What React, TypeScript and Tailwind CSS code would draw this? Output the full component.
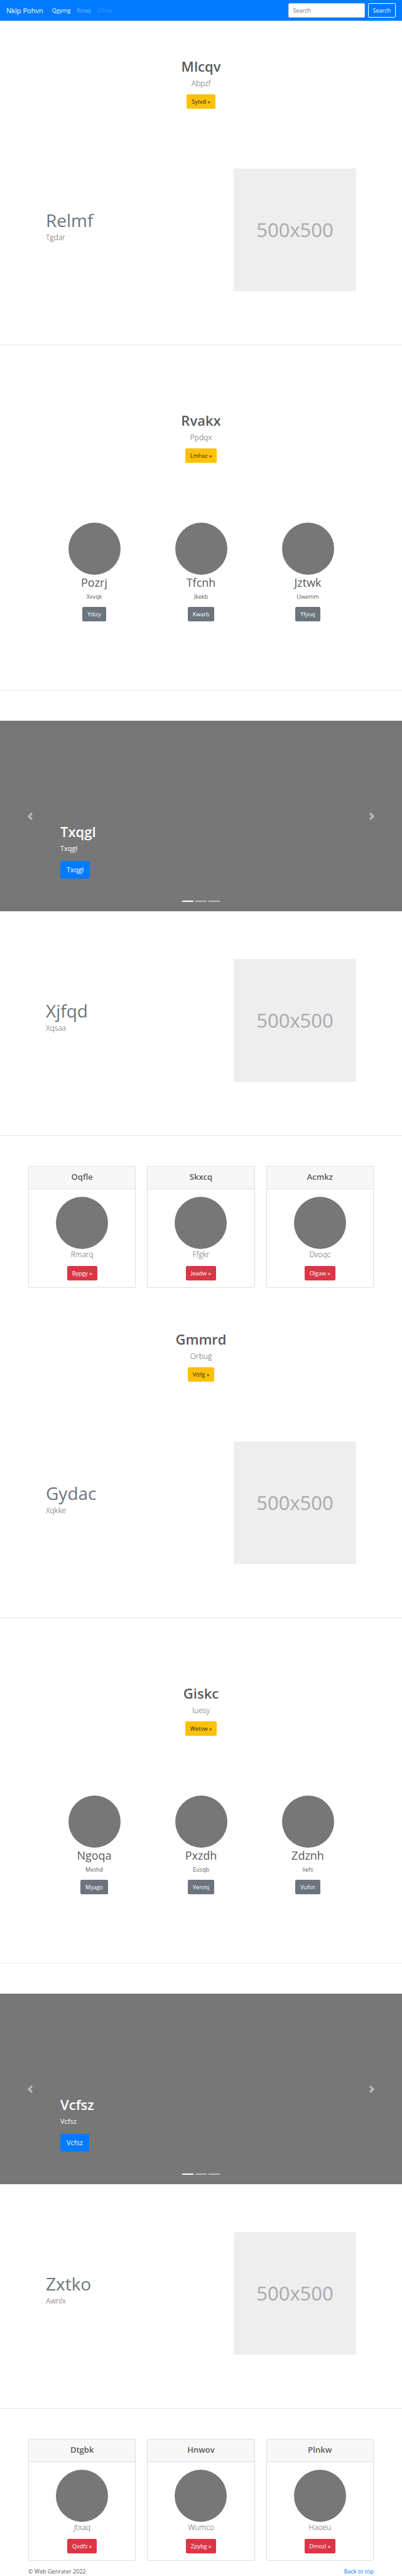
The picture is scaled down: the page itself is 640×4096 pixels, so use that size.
import React from "react";

type Item = { title: string; text: string; action: string };

const firstCircles: Item[] = [
  { title: "Pozrj", text: "Xxvqk", action: "Ydizy" },
  { title: "Tfcnh", text: "Jkekb", action: "Kwarb" },
  { title: "Jztwk", text: "Uwemm", action: "Yfyuq" },
];

const secondCircles: Item[] = [
  { title: "Ngoqa", text: "Mxshd", action: "Myago" },
  { title: "Pxzdh", text: "Eusqb", action: "Venmj" },
  { title: "Zdznh", text: "Iiefs", action: "Vufsn" },
];

const firstCards: Item[] = [
  { title: "Oqfle", text: "Rmarq", action: "Bypgy" },
  { title: "Skxcq", text: "Ffgkr", action: "Jeadw" },
  { title: "Acmkz", text: "Dvoqc", action: "Olgaw" },
];

const secondCards: Item[] = [
  { title: "Dtgbk", text: "Jtxaq", action: "Qxdfz" },
  { title: "Hnwov", text: "Wumco", action: "Zpybg" },
  { title: "Plnkw", text: "Haoeu", action: "Dmozl" },
];

const button = "flex h-[23px] items-center rounded-[2px] border px-[7px] text-[9px] leading-[14px]";

function Navbar() {
  return (
    <nav className="flex h-[33px] items-center bg-[#007bff] px-[10px] text-white">
      <a href="#" className="text-[11px] leading-[18px]">
        Nklp Pohvn
      </a>
      <div className="ml-[14px] flex gap-[10px] text-[9px] leading-[14px]">
        <a href="#">Qgymg</a>
        <a href="#" className="text-white/50">
          Kcoej
        </a>
        <a href="#" className="text-white/25">
          Oilnw
        </a>
      </div>
      <form className="ml-auto flex gap-[5px]" onSubmit={(e) => e.preventDefault()}>
        <input
          type="search"
          aria-label="Search"
          placeholder="Search"
          className="h-[23px] w-[122px] rounded-[2px] border border-[#ced4da] bg-white px-[7px] text-[9px] leading-[14px] text-[#495057] placeholder:text-[#6c757d]"
        />
        <button type="submit" className={`${button} border-white`}>
          Search
        </button>
      </form>
    </nav>
  );
}

function Hero({ title, text, action, className }: Item & { className: string }) {
  return (
    <header className={`flex flex-col items-center ${className}`}>
      <h1 className="text-[22px] leading-[28px] font-semibold">{title}</h1>
      <p className="mt-[5px] text-[12px] leading-[18px] font-light">{text}</p>
      <a href="#" className={`${button} mt-[8px] border-[#ffc107] bg-[#ffc107] text-[#212529]`}>
        {action} »
      </a>
    </header>
  );
}

function Feature({ title, text, className }: { title: string; text: string; className: string }) {
  return (
    <section
      className={`flex items-start justify-between border-b border-[#e5e5e5] px-[73px] pb-[85px] ${className}`}
    >
      <div className="pt-[65px]">
        <h2 className="text-[28px] leading-[34px] text-[#6c757d]">{title}</h2>
        <p className="mt-[2px] text-[12px] leading-[18px] font-light">{text}</p>
      </div>
      <div className="flex size-[195px] items-center justify-center bg-[#eeeeee] text-[31px] text-[#aaaaaa]">
        500x500
      </div>
    </section>
  );
}

function Circles({ items }: { items: Item[] }) {
  return (
    <section className="grid grid-cols-3 border-b border-[#e5e5e5] px-[65px] pt-[95px] pb-[109px]">
      {items.map((item) => (
        <div key={item.title} className="flex flex-col items-center">
          <div className="size-[83px] rounded-full bg-[#777777]" />
          <h2 className="text-[18px] leading-[24px]">{item.title}</h2>
          <p className="mt-[4px] text-[9px] leading-[14px]">{item.text}</p>
          <a href="#" className={`${button} mt-[9px] border-[#6c757d] bg-[#6c757d] text-white`}>
            {item.action}
          </a>
        </div>
      ))}
    </section>
  );
}

function Carousel({ label }: { label: string }) {
  return (
    <section className="relative mt-[48px] h-[303px] bg-[#777777] text-white">
      <button
        type="button"
        aria-label="Previous"
        className="absolute inset-y-0 left-0 flex w-[15%] items-center justify-center opacity-50"
      >
        <svg viewBox="0 0 8 8" className="size-3" fill="currentColor">
          <path d="M5.25 0l-4 4 4 4 1.5-1.5L4.25 4l2.5-2.5L5.25 0z" />
        </svg>
      </button>
      <button
        type="button"
        aria-label="Next"
        className="absolute inset-y-0 right-0 flex w-[15%] items-center justify-center opacity-50"
      >
        <svg viewBox="0 0 8 8" className="size-3" fill="currentColor">
          <path d="M2.75 0l-1.5 1.5L3.75 4l-2.5 2.5L2.75 8l4-4-4-4z" />
        </svg>
      </button>
      <div className="absolute inset-x-[15%] bottom-[52px] flex flex-col items-start">
        <h1 className="text-[22px] leading-[28px] font-semibold">{label}</h1>
        <p className="mt-[4px] text-[11px] leading-[18px]">{label}</p>
        <a
          href="#"
          className="mt-[11px] flex h-[28px] items-center rounded-[3px] bg-[#007bff] px-[10px] text-[11px] leading-[18px]"
        >
          {label}
        </a>
      </div>
      <div className="absolute inset-x-0 bottom-[15px] flex justify-center gap-[3px]">
        <button type="button" aria-label="Slide 1" className="h-[2px] w-[18px] bg-white" />
        <button type="button" aria-label="Slide 2" className="h-[2px] w-[18px] bg-white/50" />
        <button type="button" aria-label="Slide 3" className="h-[2px] w-[18px] bg-white/50" />
      </div>
    </section>
  );
}

function Cards({ items }: { items: Item[] }) {
  return (
    <section className="grid grid-cols-3 gap-[18px] px-[45px] pt-[48px]">
      {items.map((item) => (
        <article
          key={item.title}
          className="overflow-hidden rounded-[2px] border border-[#dfdfdf] text-center"
        >
          <h2 className="flex h-[36px] justify-center border-b border-[#dfdfdf] bg-[#f7f7f7] pt-[5px] text-[13px] leading-[22px] font-semibold">
            {item.title}
          </h2>
          <div className="flex flex-col items-center pt-[12px] pb-[11px]">
            <div className="size-[83px] rounded-full bg-[#777777]" />
            <p className="text-[12px] leading-[18px] font-light">{item.text}</p>
            <a href="#" className={`${button} mt-[9px] border-[#dc3545] bg-[#dc3545] text-white`}>
              {item.action} »
            </a>
          </div>
        </article>
      ))}
    </section>
  );
}

export default function App() {
  return (
    <div className="bg-white font-['Open_Sans','Noto_Sans',sans-serif] text-[#5a5a5a]">
      <Navbar />
      <main>
        <Hero title="Mlcqv" text="Abpzf" action="Sytvd" className="pt-[58px]" />
        <Feature title="Relmf" text="Tgdar" className="pt-[95px]" />
        <Hero title="Rvakx" text="Ppdqx" action="Lmhxz" className="pt-[105px]" />
        <Circles items={firstCircles} />
        <Carousel label="Txqgl" />
        <Feature title="Xjfqd" text="Xqsaa" className="pt-[76px]" />
        <Cards items={firstCards} />
        <Hero title="Gmmrd" text="Orbug" action="Vttfg" className="pt-[67px]" />
        <Feature title="Gydac" text="Xqkke" className="pt-[95px]" />
        <Hero title="Giskc" text="Iuesy" action="Wetsw" className="pt-[105px]" />
        <Circles items={secondCircles} />
        <Carousel label="Vcfsz" />
        <Feature title="Zxtko" text="Awnlx" className="pt-[76px]" />
        <Cards items={secondCards} />
      </main>
      <footer className="flex justify-between px-[45px] pt-[10px] text-[9px] leading-[14px]">
        <p>© Web Genrater 2022</p>
        <a href="#" className="text-[#007bff]">
          Back to top
        </a>
      </footer>
    </div>
  );
}
